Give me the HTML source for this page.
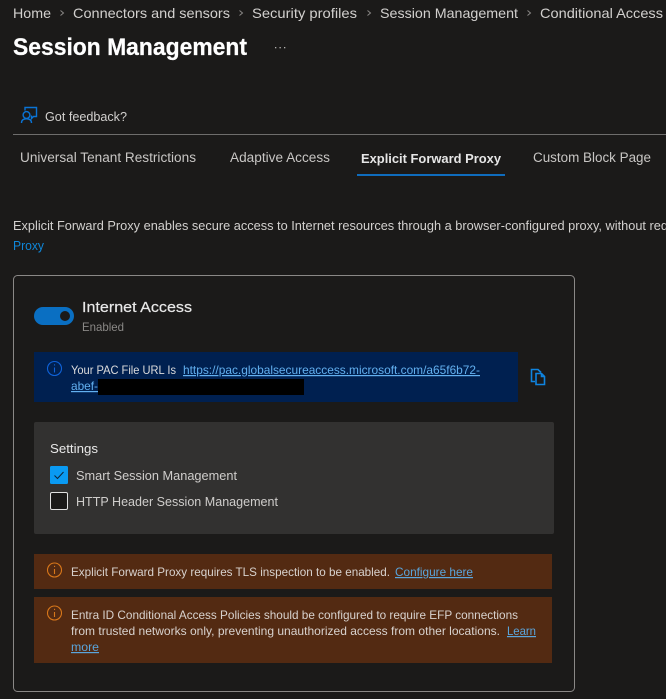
<!DOCTYPE html>
<html lang="en">
<head>
<meta charset="utf-8">
<title>Session Management</title>
<style>
html,body{margin:0;padding:0;background:#1b1a19;width:666px;height:699px;overflow:hidden}
svg{display:block}
text{font-family:"Liberation Sans",sans-serif;font-size:13px;fill:#d6d6d6;white-space:pre}
.bc{font-size:14px;fill:#d2d0ce}
.tab{font-size:13.5px;fill:#c8c6c4}
.lnk{fill:#5aa9e6;text-decoration:underline}
.w{font-size:12px;fill:#d8d2ce}
.b{font-size:12px;fill:#dcdcdc}
.wl{font-size:12px;fill:#5aa5dc;text-decoration:underline}
.bl{font-size:12px;fill:#62b0f0;text-decoration:underline}
</style>
</head>
<body>
<svg width="666" height="699" viewBox="0 0 666 699" xmlns="http://www.w3.org/2000/svg">
<rect width="666" height="699" fill="#1b1a19"/>

<text class="bc" x="13" y="18" textLength="38" lengthAdjust="spacingAndGlyphs">Home</text>
<text class="bc" x="73" y="18" textLength="157" lengthAdjust="spacingAndGlyphs">Connectors and sensors</text>
<text class="bc" x="252" y="18" textLength="105" lengthAdjust="spacingAndGlyphs">Security profiles</text>
<text class="bc" x="380" y="18" textLength="138" lengthAdjust="spacingAndGlyphs">Session Management</text>
<text class="bc" x="540" y="18" textLength="123" lengthAdjust="spacingAndGlyphs">Conditional Access</text>
<g fill="none" stroke="#8a8886" stroke-width="1">
<path d="M60.5 10.5l3 2.5-3 2.5"/><path d="M239.5 10.5l3 2.5-3 2.5"/><path d="M367.5 10.5l3 2.5-3 2.5"/><path d="M527.5 10.5l3 2.5-3 2.5"/>
</g>

<text x="13" y="55" font-weight="700" style="font-size:24px;fill:#fff;stroke:#fff;stroke-width:.25" textLength="234" lengthAdjust="spacingAndGlyphs">Session Management</text>
<g fill="#b5b3b1"><rect x="275" y="47" width="1.3" height="1.3"/><rect x="279.5" y="47" width="1.3" height="1.3"/><rect x="284" y="47" width="1.3" height="1.3"/></g>

<g fill="none" stroke="#0a74d6" stroke-width="1.4">
<path d="M25 110.5V107.5H36.5V116.5H33.5L31.5 118.5V115.5"/>
<circle cx="26.5" cy="115" r="3.4"/>
<path d="M21.5 123C21.5 120 23.5 118.8 26.5 118.8C29.5 118.8 31.5 120 31.5 123"/>
</g>
<text x="45" y="121" textLength="82" lengthAdjust="spacingAndGlyphs" style="fill:#d2d0ce">Got feedback?</text>
<rect x="13" y="134" width="653" height="1" fill="#6e6d6c"/>

<text class="tab" x="20" y="162" textLength="176" lengthAdjust="spacingAndGlyphs">Universal Tenant Restrictions</text>
<text class="tab" x="230" y="162" textLength="100" lengthAdjust="spacingAndGlyphs">Adaptive Access</text>
<text class="tab" x="361" y="163" font-weight="700" textLength="140" lengthAdjust="spacingAndGlyphs" style="fill:#e6e6e6;font-size:13px">Explicit Forward Proxy</text>
<text class="tab" x="533" y="162" textLength="118" lengthAdjust="spacingAndGlyphs">Custom Block Page</text>
<rect x="357" y="174" width="148" height="2" fill="#0f6cbd"/>

<text x="13" y="230" textLength="655" lengthAdjust="spacingAndGlyphs" style="font-size:12.5px;fill:#d2d0ce">Explicit Forward Proxy enables secure access to Internet resources through a browser-configured proxy, without req</text>
<text x="13" y="250" textLength="31" lengthAdjust="spacingAndGlyphs" style="fill:#0f86d8">Proxy</text>

<rect x="13.5" y="275.5" width="561" height="416" rx="4" fill="none" stroke="#8a8886"/>

<rect x="34" y="307" width="40" height="18" rx="9" fill="#0a6fc2"/>
<circle cx="65" cy="316" r="5" fill="#1b1a19"/>
<text x="82" y="312" textLength="110" lengthAdjust="spacingAndGlyphs" style="font-size:15px;fill:#e8e8e8;font-weight:400;stroke:#e8e8e8;stroke-width:.2">Internet Access</text>
<text x="82" y="331" textLength="42" lengthAdjust="spacingAndGlyphs" style="font-size:12px;fill:#8a8886">Enabled</text>

<rect x="34" y="352" width="484" height="50" fill="#002050"/>
<g fill="none" stroke="#0f62d8" stroke-width="1.1"><circle cx="54.5" cy="368.5" r="7"/><path d="M54.5 367.5v5"/></g>
<rect x="54" y="364.3" width="1.1" height="1.2" fill="#0f62d8"/>
<text class="b" x="71" y="374" textLength="105" lengthAdjust="spacingAndGlyphs">Your PAC File URL Is</text>
<text class="bl" x="183" y="374" textLength="297" lengthAdjust="spacingAndGlyphs">https://pac.globalsecureaccess.microsoft.com/a65f6b72-</text>
<text class="bl" x="71" y="390" textLength="27" lengthAdjust="spacingAndGlyphs">abef-</text>
<rect x="98" y="379" width="206" height="16" fill="#000"/>

<g fill="none" stroke="#0f84e0" stroke-width="1.6">
<path d="M535 381.5H531.5V369.5H538L541 372.5"/>
<path d="M536 373.5H541.5L544.5 376.5V384.5H536Z"/>
<path d="M541.5 373.5V376.5H544.5"/>
</g>

<rect x="34" y="422" width="520" height="112" rx="2" fill="#323130"/>
<text x="50" y="453" textLength="48" lengthAdjust="spacingAndGlyphs" style="font-size:12.5px;fill:#e8e8e8">Settings</text>
<rect x="50" y="466" width="18" height="18" rx="1.5" fill="#0a9af2"/>
<path d="M54.5 475.5L57.5 478.5L63.5 472" fill="none" stroke="#0e2438" stroke-width="1"/>
<text x="76" y="480" textLength="161" lengthAdjust="spacingAndGlyphs" style="fill:#cfcdcb">Smart Session Management</text>
<rect x="50.5" y="492.5" width="17" height="17" rx="1.5" fill="#1b1a19" stroke="#e0e0e0"/>
<text x="76" y="506" textLength="202" lengthAdjust="spacingAndGlyphs" style="fill:#cfcdcb">HTTP Header Session Management</text>

<rect x="34" y="554" width="518" height="35" fill="#532a12"/>
<g fill="none" stroke="#d8771a" stroke-width="1.1"><circle cx="54.5" cy="570" r="7"/><path d="M54.5 569v5"/></g>
<rect x="54" y="565.8" width="1.1" height="1.2" fill="#d8771a"/>
<text class="w" x="71" y="576" textLength="319" lengthAdjust="spacingAndGlyphs">Explicit Forward Proxy requires TLS inspection to be enabled.</text>
<text class="wl" x="395" y="576" textLength="78" lengthAdjust="spacingAndGlyphs">Configure here</text>

<rect x="34" y="597" width="518" height="66" fill="#532a12"/>
<g fill="none" stroke="#d8771a" stroke-width="1.1"><circle cx="54.5" cy="613" r="7"/><path d="M54.5 612v5"/></g>
<rect x="54" y="608.8" width="1.1" height="1.2" fill="#d8771a"/>
<text class="w" x="71" y="619" textLength="447" lengthAdjust="spacingAndGlyphs">Entra ID Conditional Access Policies should be configured to require EFP connections</text>
<text class="w" x="71" y="635" textLength="429" lengthAdjust="spacingAndGlyphs">from trusted networks only, preventing unauthorized access from other locations.</text>
<text class="wl" x="507" y="635" textLength="29" lengthAdjust="spacingAndGlyphs">Learn</text>
<text class="wl" x="71" y="651" textLength="28" lengthAdjust="spacingAndGlyphs">more</text>
</svg>
</body>
</html>
